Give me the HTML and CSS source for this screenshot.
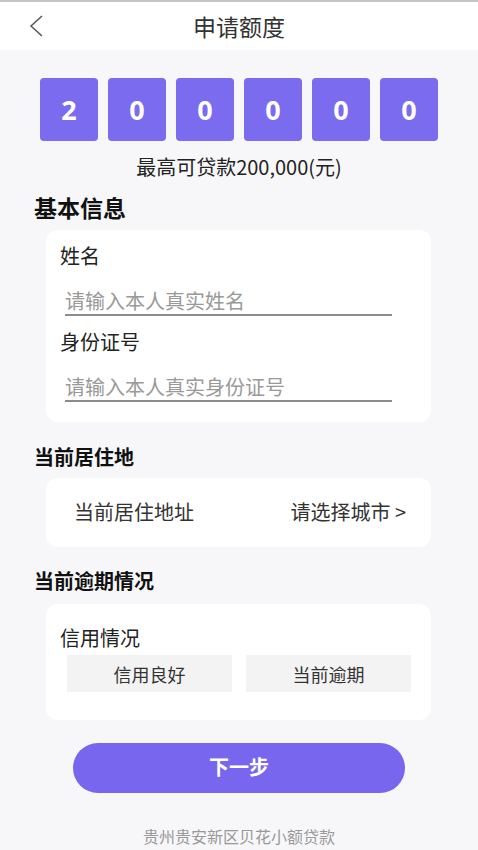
FILE: index.html
```html
<!DOCTYPE html>
<html lang="zh">
<head>
<meta charset="utf-8">
<title>申请额度</title>
<link rel="stylesheet" href="styles.css">
</head>
<body>
<header class="header">
  <div class="back">
    <svg width="14" height="22" viewBox="0 0 14 22"><path d="M13 1 L2 11 L13 21" fill="none" stroke="#555" stroke-width="1.5"/></svg>
  </div>
  <div class="title">申请额度</div>
  <div></div>
</header>
<main class="page">
  <div class="digits">
    <div class="digit">2</div>
    <div class="digit">0</div>
    <div class="digit">0</div>
    <div class="digit">0</div>
    <div class="digit">0</div>
    <div class="digit">0</div>
  </div>
  <div class="caption">最高可贷款200,000(元)</div>

  <h2 class="sec-title big">基本信息</h2>
  <section class="card card-info">
    <div class="label">姓名</div>
    <div class="field">请输入本人真实姓名</div>
    <div class="label label-2">身份证号</div>
    <div class="field">请输入本人真实身份证号</div>
  </section>

  <h3 class="sec-title sec-2">当前居住地</h3>
  <section class="card card-addr">
    <span class="addr-label">当前居住地址</span>
    <span class="addr-value">请选择城市&nbsp;&gt;</span>
  </section>

  <h3 class="sec-title sec-3">当前逾期情况</h3>
  <section class="card card-credit">
    <div class="label">信用情况</div>
    <div class="options">
      <div class="option">信用良好</div>
      <div class="option">当前逾期</div>
    </div>
  </section>

  <button class="next">下一步</button>
  <footer class="footer">贵州贵安新区贝花小额贷款</footer>
</main>
</body>
</html>
```

FILE: styles.css
```css
* { box-sizing: border-box; }
html, body { margin: 0; padding: 0; }
body {
  background: #f7f7f9;
  font-family: "Noto Sans CJK SC", "Noto Sans", sans-serif;
  color: #222;
  width: 478px;
  height: 850px;
  overflow: hidden;
}
.header {
  height: 50px;
  border-top: 2px solid #c6c6c6;
  background: #fff;
  display: grid;
  grid-template-columns: 1fr auto 1fr;
  align-items: center;
}
.back { padding-left: 29px; display: flex; align-items: center; height: 48px; }
.back svg { display: block; }
.title { font-size: 23px; color: #333; line-height: 48px; }
.page { display: flex; flex-direction: column; }
.digits {
  display: flex;
  justify-content: center;
  gap: 10px;
  margin-top: 28px;
}
.digit {
  width: 58px;
  height: 63px;
  border-radius: 4px;
  background: #7a6bef;
  color: #fff;
  font-family: "Noto Sans", sans-serif;
  font-weight: 700;
  font-size: 27px;
  display: flex;
  align-items: center;
  justify-content: center;
}
.caption {
  margin-top: 13px;
  text-align: center;
  font-size: 20px;
  line-height: 26px;
  color: #222;
}
.sec-title {
  margin: 0;
  padding-left: 34px;
  font-weight: 700;
  color: #111;
}
.big { font-size: 23px; line-height: 30px; margin-top: 12px; }
.sec-2, .sec-3 { font-size: 20px; line-height: 26px; }
.sec-2 { margin-top: 22px; }
.sec-3 { margin-top: 21px; }
.card {
  margin-left: 46px;
  width: 385px;
  background: #fff;
  border-radius: 12px;
}
.card-info { margin-top: 8px; padding: 13px 14px 20px; }
.label { font-size: 20px; line-height: 26px; color: #222; }
.label-2 { margin-top: 13px; }
.field {
  margin-top: 19px;
  margin-left: 5px;
  width: 327px;
  font-size: 20px;
  line-height: 26px;
  color: #999;
  border-bottom: 2px solid #8c8c8c;
}
.card-addr {
  margin-top: 8px;
  height: 69px;
  display: flex;
  align-items: center;
  justify-content: space-between;
  padding: 0 25px 2px 28px;
  font-size: 20px;
  color: #333;
}
.card-credit { margin-top: 10px; padding: 21px 14px 28px; }
.options {
  margin-top: 4px;
  padding-left: 7px;
  display: flex;
  gap: 14px;
}
.option {
  width: 165px;
  height: 37px;
  background: #f3f3f3;
  display: flex;
  align-items: center;
  justify-content: center;
  font-size: 18px;
  color: #333;
}
.next {
  margin: 23px 0 0 73px;
  width: 332px;
  height: 50px;
  border: none;
  border-radius: 25px;
  background: #7966ee;
  color: #fff;
  font-family: "Noto Sans CJK SC", sans-serif;
  font-size: 20px;
  font-weight: 700;
  padding: 0 0 4px;
}
.footer {
  margin-top: 32px;
  text-align: center;
  font-size: 16px;
  line-height: 22px;
  color: #999;
}
```
